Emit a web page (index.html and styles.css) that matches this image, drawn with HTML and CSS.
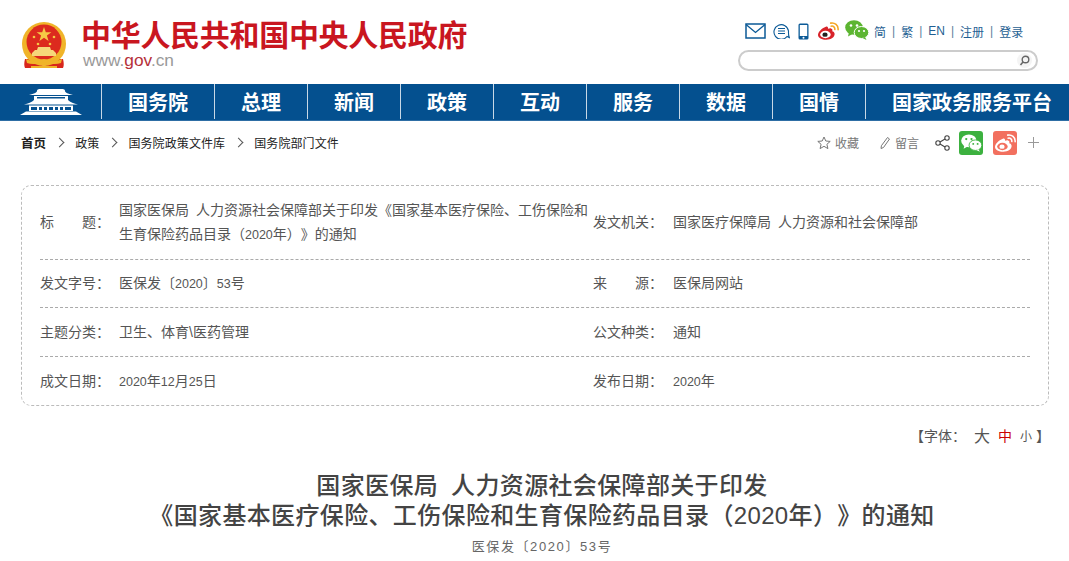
FILE: index.html
```html
<!DOCTYPE html>
<html lang="zh-CN">

<head>
  <meta charset="UTF-8">
  <title>国家医保局 人力资源社会保障部关于印发《国家基本医疗保险、工伤保险和生育保险药品目录（2020年）》的通知</title>
  <link rel="stylesheet" href="styles.css">
</head>

<body>
  <svg class="sprites" width="0" height="0">
    <symbol id="weibo" viewBox="0 0 24 20">
      <path d="M9 5C4 7 0 11 0 14.500 0 18 4.500 20 9.500 20 15 20 19 17 19 13.500c0-1.800-1.500-2.800-2.800-3.100.6-1.500.4-3-1.400-3.400-1.200-.2-2.400.2-3.300.5.2-1.500-.5-3.500-2.500-2.500z" fill="currentColor" />
      <ellipse cx="8.500" cy="14" rx="6" ry="4.200" fill="var(--inner, #fff)" />
      <ellipse cx="8" cy="14.200" rx="3" ry="2.500" fill="var(--eye, #222)" />
      <path d="M14.500 1c4.500-1 9 2.500 8.500 7.500M15 4.500c2.500-.6 4.600 1.200 4.200 3.800" fill="none" stroke="var(--wave, #f5a623)" stroke-width="1.800" stroke-linecap="round" />
    </symbol>
    <symbol id="wechat" viewBox="0 0 24 20">
      <ellipse cx="9" cy="7.500" rx="8.800" ry="7.300" fill="currentColor" />
      <path d="M4 12l-1 4.500 4.500-2.500z" fill="currentColor" />
      <ellipse cx="16.500" cy="12.500" rx="7.300" ry="6" fill="currentColor" stroke="var(--gap, #fff)" stroke-width="1" />
      <path d="M20 17l1.500 3-4-2z" fill="currentColor" />
      <circle cx="6" cy="5.500" r="1.300" fill="var(--gap, #fff)" />
      <circle cx="12" cy="5.500" r="1.300" fill="var(--gap, #fff)" />
      <circle cx="14" cy="11" r="1.100" fill="var(--gap, #fff)" />
      <circle cx="19" cy="11" r="1.100" fill="var(--gap, #fff)" />
    </symbol>
  </svg>

  <header class="top">
    <div class="brand">
      <svg class="emblem" width="46" height="48" viewBox="0 0 46 48">
        <path d="M4 37c-1 4-1 7 0 9h12l7-3 7 3h12c1-2 1-5 0-9z" fill="#d8261c" />
        <circle cx="23" cy="22" r="22" fill="#f0b429" />
        <circle cx="23" cy="20" r="17.500" fill="#dc2a1e" />
        <path d="M23 5l1.800 5.300h5.600l-4.500 3.300 1.700 5.300-4.600-3.200-4.600 3.200 1.700-5.300-4.500-3.300h5.600z" fill="#f6c945" />
        <circle cx="13" cy="15" r="1.300" fill="#f6c945" />
        <circle cx="33" cy="15" r="1.300" fill="#f6c945" />
        <circle cx="17" cy="22" r="1.300" fill="#f6c945" />
        <circle cx="29" cy="22" r="1.300" fill="#f6c945" />
        <path d="M14 28h18l3 3v3H11v-3zM17 25h12l1 3H16z" fill="#f6d77a" />
        <path d="M5 37c6 3 12 2 18 0 6 2 12 3 18 0l-1 4c-5 2-11 1-17-1-6 2-12 3-17 1z" fill="#f0b429" />
        <path d="M10 44h26v2H10z" fill="#f0b429" />
      </svg>
      <div class="brand-text">
        <div class="brand-name">中华人民共和国中央人民政府</div>
        <div class="brand-url">www.<b>gov</b>.cn</div>
      </div>
    </div>
    <div class="top-right">
      <div class="top-tools">
        <svg width="21" height="16" viewBox="0 0 21 16" class="ico-blue">
          <rect x="1" y="1" width="19" height="14" fill="none" stroke="currentColor" stroke-width="1.500" />
          <path d="M1 1.500l9.500 8 9.500-8" fill="none" stroke="currentColor" stroke-width="1.300" />
        </svg>
        <svg width="17" height="16" viewBox="0 0 17 16" class="ico-blue">
          <path d="M14 13.500A7.300 7.300 0 1 1 15.500 8c0 2-.3 4 .8 6.500z" fill="none" stroke="currentColor" stroke-width="1.100" />
          <path d="M5 5.500h7M5 8h7M5 10.500h7" stroke="currentColor" stroke-width="1" />
        </svg>
        <svg class="ico-blue ico-phone" width="11" height="17" viewBox="0 0 11 17">
          <rect x=".5" y=".5" width="10" height="16" rx="1.500" fill="currentColor" />
          <rect x="1.800" y="2" width="7.400" height="11" fill="#fff" />
          <circle cx="5.500" cy="14.800" r="1" fill="#fff" />
        </svg>
        <svg class="ico-weibo" width="21" height="18"><use href="#weibo" /></svg>
        <svg class="ico-wechat" width="24" height="20"><use href="#wechat" /></svg>
        <nav class="top-links">
          <a>简</a><i>|</i><a>繁</a><i>|</i><a>EN</a><i>|</i><a>注册</a><i>|</i><a>登录</a>
        </nav>
      </div>
      <div class="search">
        <span class="search-btn">
          <svg width="11" height="11" viewBox="0 0 11 11">
            <circle cx="6.500" cy="4.500" r="3.300" fill="none" stroke="#666" stroke-width="1.400" />
            <path d="M4 7L1.500 10" stroke="#666" stroke-width="1.500" />
          </svg>
        </span>
      </div>
    </div>
  </header>

  <nav class="mainnav">
    <a class="nav-home">
      <svg width="62" height="26" viewBox="0 0 62 26">
        <path fill="#fff" d="M19 0h24l2 1c-1 2 3 4 8 5H9c5-1 9-3 8-5z" />
        <path fill="#fff" fill-rule="evenodd" d="M14 7h34v4H14zM17 8v1.500h28V8z" />
        <path fill="#fff" d="M14 11h34c2 2 6 3.500 10 4.500H4c4-1 8-2.500 10-4.500z" />
        <path fill="#fff" fill-rule="evenodd" d="M9 16.500h44V22H9zM11 18v3h6v-3zM19 18v3h3v-3zM24 18v3h3v-3zM29 18v3h4v-3zM35 18v3h3v-3zM40 18v3h3v-3zM45 18v3h6v-3z" />
        <path fill="#fff" d="M6 22.500h50l6 3.500H0z" />
      </svg>
    </a>
    <a>国务院</a><a>总理</a><a>新闻</a><a>政策</a><a>互动</a><a>服务</a><a>数据</a><a>国情</a>
    <a class="nav-last">国家政务服务平台</a>
  </nav>

  <div class="crumbs">
    <div class="crumb-path">
      <a class="crumb-home">首页</a><span class="sep"></span><a>政策</a><span class="sep"></span><a>国务院政策文件库</a><span class="sep"></span><a>国务院部门文件</a>
    </div>
    <div class="crumb-tools">
      <span class="tool tool-fav">
        <svg width="14" height="14" viewBox="0 0 14 14">
          <path d="M7 1l1.800 4 4.400.4-3.300 2.900 1 4.300L7 10.300l-3.900 2.300 1-4.300L.8 5.400 5.200 5z" fill="none" stroke="#777" stroke-width="1" />
        </svg>收藏
      </span>
      <span class="tool">
        <svg width="12" height="14" viewBox="0 0 12 14">
          <path d="M8.500 1.500l2 1.500-6 8.500-2.500 1 .4-2.800z" fill="none" stroke="#777" stroke-width="1" />
        </svg>留言
      </span>
      <svg class="share" width="15" height="16" viewBox="0 0 15 16">
        <circle cx="12" cy="3" r="2.200" fill="none" stroke="#444" stroke-width="1.100" />
        <circle cx="3" cy="8" r="2.200" fill="none" stroke="#444" stroke-width="1.100" />
        <circle cx="12" cy="13" r="2.200" fill="none" stroke="#444" stroke-width="1.100" />
        <path d="M5 7l5-3M5 9l5 3" stroke="#444" stroke-width="1.100" />
      </svg>
      <span class="share-btn wechat-btn"><svg width="21" height="18"><use href="#wechat" /></svg></span>
      <span class="share-btn weibo-btn"><svg width="21" height="18"><use href="#weibo" /></svg></span>
      <span class="plus"></span>
    </div>
  </div>

  <section class="info">
    <div class="info-row">
      <div class="lbl">标&emsp;&emsp;题：</div>
      <div class="val">国家医保局 人力资源社会保障部关于印发《国家基本医疗保险、工伤保险和<br>生育保险药品目录（<span class="num">2020</span>年）》的通知</div>
      <div class="lbl">发文机关：</div>
      <div class="val">国家医疗保障局 人力资源和社会保障部</div>
    </div>
    <div class="info-row">
      <div class="lbl">发文字号：</div>
      <div class="val">医保发〔<span class="num">2020</span>〕<span class="num">53</span>号</div>
      <div class="lbl">来&emsp;&emsp;源：</div>
      <div class="val">医保局网站</div>
    </div>
    <div class="info-row">
      <div class="lbl">主题分类：</div>
      <div class="val">卫生、体育\医药管理</div>
      <div class="lbl">公文种类：</div>
      <div class="val">通知</div>
    </div>
    <div class="info-row">
      <div class="lbl">成文日期：</div>
      <div class="val"><span class="num">2020</span>年<span class="num">12</span>月<span class="num">25</span>日</div>
      <div class="lbl">发布日期：</div>
      <div class="val"><span class="num">2020</span>年</div>
    </div>
  </section>

  <div class="fontsize">【字体：<a class="fs-big">大</a><a class="fs-mid">中</a><a class="fs-small">小</a>】</div>

  <div class="doc-head">
    <h1 class="doc-title">国家医保局 人力资源社会保障部关于印发<br>《国家基本医疗保险、工伤保险和生育保险药品目录（2020年）》的通知</h1>
    <div class="doc-no">医保发〔2020〕53号</div>
  </div>
</body>

</html>
```

FILE: styles.css
```css
* {
  box-sizing: border-box;
}

body {
  margin: 0;
  font-family: "Liberation Sans", "Noto Sans CJK SC", sans-serif;
  font-size: 14px;
  color: #555;
  background: #fff;
  text-spacing-trim: space-all;
}

.sprites {
  display: block;
  height: 0;
}

.top {
  display: flex;
  justify-content: space-between;
  height: 84px;
  padding: 0 31px 0 21px;
}

.brand {
  display: flex;
  gap: 15px;
  padding-top: 22px;
}

.brand-text {
  margin-top: -4px;
}

.brand-name {
  font-size: 30px;
  line-height: 36px;
  font-weight: 700;
  letter-spacing: -.3px;
  color: #c9161f;
  margin-left: -1px;
}

.brand-url {
  font-size: 17.300px;
  line-height: 20px;
  color: #999;
  margin: -4px 0 0 1px;
}

.brand-url b {
  font-weight: 400;
  color: #b5303a;
}

.top-right {
  width: 300px;
  padding-top: 21px;
}

.top-tools {
  display: flex;
  align-items: center;
  height: 20px;
  padding-left: 7px;
}

.ico-blue {
  color: #0b5a97;
  margin-right: 7px;
}

.ico-phone {
  margin: 0 9px 0 1px;
}

.ico-weibo {
  color: #d8232a;
  margin-right: 6px;
}

.ico-wechat {
  color: #5cb531;
  margin: -2px 5px 0 0;
}

.top-links {
  display: flex;
  align-items: center;
  font-size: 12px;
  color: #1f5f93;
}

.top-links i {
  font-style: normal;
  margin: 0 6px;
  color: #5a7f9c;
}

.search {
  display: flex;
  justify-content: flex-end;
  align-items: center;
  height: 21px;
  margin-top: 9px;
  padding-right: 4px;
  border: 2px solid #ccc;
  border-radius: 11px;
}

.search-btn {
  display: flex;
  align-items: center;
  justify-content: center;
  width: 15px;
  height: 15px;
  border-radius: 50%;
  background: #f4f4f4;
}

.mainnav {
  display: flex;
  height: 37px;
  padding-bottom: 1px;
  background: #04508f;
  border-bottom: 1px solid #2e6ea5;
}

.mainnav a {
  display: flex;
  align-items: center;
  justify-content: center;
  width: 93px;
  border-right: 1px solid #c8d8e6;
  font-size: 20px;
  font-weight: 700;
  color: #fff;
}

.mainnav .nav-home {
  width: 102px;
}

.mainnav a:nth-child(2) {
  width: 113px;
}

.mainnav .nav-last {
  width: auto;
  flex: 1;
  padding-left: 9px;
  border-right: 0;
}

.crumbs {
  display: flex;
  justify-content: space-between;
  align-items: center;
  height: 43px;
  padding: 0 30px 0 21px;
}

.crumb-path {
  display: flex;
  align-items: center;
  font-size: 12px;
  letter-spacing: .1px;
  color: #222;
}

.crumb-home {
  font-weight: 700;
  font-size: 12.500px;
}

.sep {
  width: 7px;
  height: 7px;
  margin: 0 12px 0 10px;
  border-top: 1px solid #555;
  border-right: 1px solid #555;
  transform: rotate(45deg);
}

.crumb-tools {
  display: flex;
  align-items: center;
  font-size: 12px;
  color: #777;
}

.tool {
  display: flex;
  align-items: center;
  gap: 4px;
  margin-right: 16px;
}

.tool-fav {
  margin-right: 20px;
}

.share {
  margin-right: 9px;
}

.share-btn {
  display: flex;
  align-items: center;
  justify-content: center;
  width: 24px;
  height: 24px;
  margin-right: 10px;
  border-radius: 3px;
  color: #fff;
}

.wechat-btn {
  background: #3cb13f;
  --gap: #3cb13f;
}

.weibo-btn {
  background: #f2705f;
  --inner: #f2705f;
  --eye: #fff;
  --wave: #fff;
}

.plus {
  width: 11px;
  height: 11px;
  margin-left: 1px;
  background:
    linear-gradient(#999, #999) center / 100% 1px no-repeat,
    linear-gradient(#999, #999) center / 1px 100% no-repeat;
}

.info {
  margin: 21px 20px 0 21px;
  padding: 0 18px;
  border: 1px dashed #bbb;
  border-radius: 10px;
}

.info-row {
  display: grid;
  grid-template-columns: 79px 474px 80px 1fr;
  align-items: center;
  padding: 12px 0;
  line-height: 24px;
  word-spacing: 3px;
  border-bottom: 1px dashed #aaa;
}

.info-row:first-child {
  padding-bottom: 13px;
}

.info-row:nth-child(2) {
  padding-top: 11px;
}

.info-row:last-child {
  border-bottom: 0;
}

.num {
  font-size: 12.500px;
  line-height: 1;
}

.fontsize {
  display: flex;
  justify-content: flex-end;
  align-items: center;
  height: 24px;
  margin: 17px 19px 0 0;
  font-size: 14px;
}

.fs-big {
  margin: 0 8px;
  font-size: 16px;
}

.fs-mid {
  margin-right: 8px;
  color: #c00;
}

.fs-small {
  margin-right: 4px;
  font-size: 12px;
}

.doc-head {
  margin-top: 24px;
  padding-left: 15px;
  text-align: center;
}

.doc-title {
  margin: 0;
  font-size: 24px;
  line-height: 30px;
  font-weight: 500;
  letter-spacing: .35px;
  word-spacing: 6px;
  color: #444;
}

.doc-no {
  margin-top: 6px;
  font-size: 13px;
  letter-spacing: 1.600px;
  line-height: 20px;
  color: #666;
}
```
